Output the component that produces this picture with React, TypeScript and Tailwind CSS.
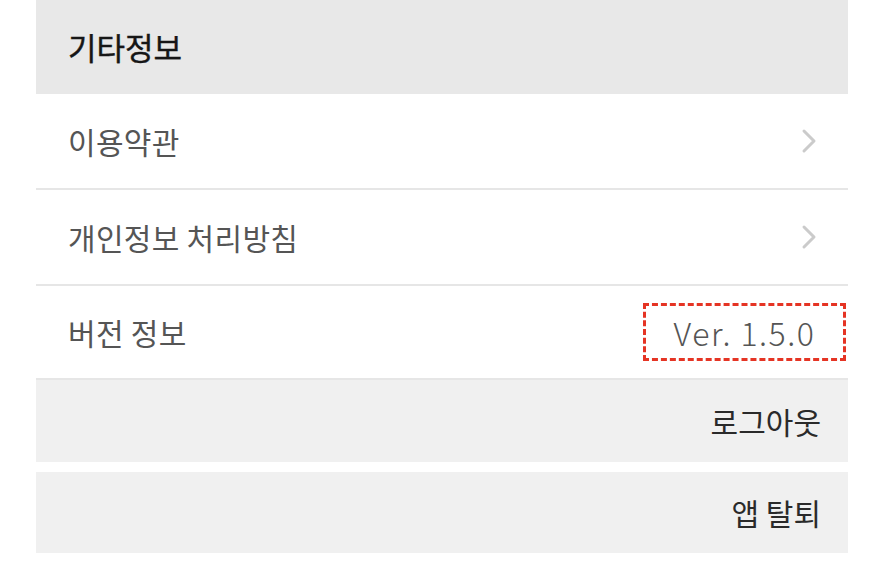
import { ChevronRight } from 'lucide-react';

const font = { fontFamily: '"Noto Sans CJK KR", "Noto Sans", sans-serif' };

// 기타정보 메뉴
const links = ['이용약관', '개인정보 처리방침'];

export default function App() {
  return (
    <div className="w-[880px] h-[582px] bg-white pl-[36px] pr-[32px]" style={font}>
      <div className="h-[94px] bg-[#e8e8e8] flex items-center pl-[32px]">
        <span className="text-[31px] text-[#161616] [-webkit-text-stroke:0.4px_#161616]">기타정보</span>
      </div>

      {links.map((label) => (
        <div
          key={label}
          className="h-[96px] flex items-center justify-between pl-[32px] pr-[19px] border-b-2 border-[#e6e6e6]"
        >
          <span className="text-[30px] text-[#555] tracking-[0.3px]">{label}</span>
          <ChevronRight size={40} strokeWidth={1.8} className="text-[#cbcbcb]" />
        </div>
      ))}

      <div className="h-[94px] flex items-center justify-between pl-[32px] pr-[2px] border-b-2 border-[#e6e6e6]">
        <span className="text-[30px] text-[#555] tracking-[0.3px]">버전 정보</span>
        <div className="w-[203px] h-[58px] border-[3px] border-dashed border-[#e53424] flex items-center justify-center">
          <span className="text-[32px] font-light text-[#555] tracking-[1.5px]">Ver. 1.5.0</span>
        </div>
      </div>

      <div className="h-[82px] bg-[#f0f0f0] flex items-center justify-end pr-[27px]">
        <span className="text-[30px] text-[#2a2a2a]">로그아웃</span>
      </div>
      <div className="h-[10px]" />
      <div className="h-[81px] bg-[#f0f0f0] flex items-center justify-end pr-[27px]">
        <span className="text-[30px] text-[#2a2a2a]">앱 탈퇴</span>
      </div>
    </div>
  );
}
